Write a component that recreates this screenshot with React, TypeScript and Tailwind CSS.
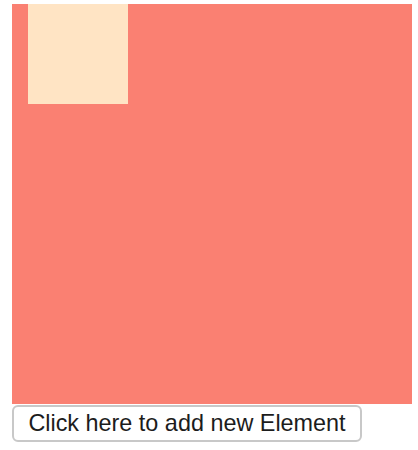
export default function App() {
  return (
    <div className="pt-1 pl-3" style={{ fontFamily: '"Liberation Sans", Arial, sans-serif' }}>
      <div className="w-[400px] h-[400px] bg-[#fa8072] pl-4">
        <div className="w-[100px] h-[100px] bg-[#ffe4c4]" />
      </div>
      <button className="mt-px h-[37px] w-[350px] rounded-[6px] border-2 border-[#c8c8c8] bg-white text-[23.4px] leading-none text-[#1c1c1c] font-['Liberation_Sans',Arial,sans-serif]">
        Click here to add new Element
      </button>
    </div>
  );
}
